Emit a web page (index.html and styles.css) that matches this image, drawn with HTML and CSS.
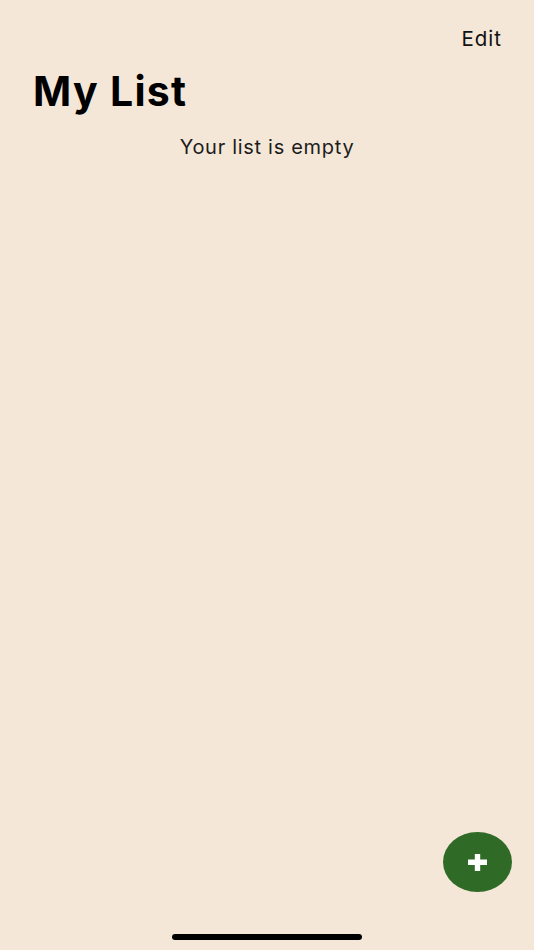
FILE: index.html
```html
<!DOCTYPE html>
<html lang="en">
<head>
<meta charset="utf-8">
<title>My List</title>
<link rel="stylesheet" href="styles.css">
</head>
<body>
<div class="screen">
  <header class="nav">
    <button class="edit">Edit</button>
  </header>
  <h1 class="title">My List</h1>
  <p class="empty">Your list is empty</p>
  <button class="fab" aria-label="Add">
    <svg width="19" height="17" viewBox="0 0 19 17"><rect x="0" y="5.5" width="19" height="5.5" fill="#fff"/><rect x="6.8" y="0" width="5.4" height="17" fill="#fff"/></svg>
  </button>
  <div class="home-indicator"></div>
</div>
</body>
</html>
```
FILE: styles.css
```css
html, body {
  margin: 0;
  padding: 0;
  background: #f5e7d7;
}
.screen {
  position: relative;
  width: 534px;
  height: 950px;
  overflow: hidden;
  font-family: Inter, "Liberation Sans", sans-serif;
  color: #111;
}
.nav {
  display: flex;
  justify-content: flex-end;
  padding: 23px 33px 0 0;
  height: 32px;
}
.edit {
  background: none;
  border: 0;
  padding: 0;
  font: 400 20.5px/26px Inter, "Liberation Sans", sans-serif;
  letter-spacing: 1px;
  margin-right: -1px;
  color: #111;
}
.title {
  margin: 12px 0 0 33px;
  font-size: 41px;
  line-height: 48px;
  font-weight: 700;
  color: #000;
  letter-spacing: 1.3px;
}
.empty {
  margin: 19px 0 0;
  text-align: center;
  font-size: 20px;
  line-height: 26px;
  font-weight: 400;
  color: #1c1c1c;
  letter-spacing: 0.7px;
}
.fab {
  position: absolute;
  left: 443px;
  top: 832px;
  width: 69px;
  height: 60px;
  border-radius: 50%;
  border: 0;
  padding: 0;
  background: #2f6a27;
  display: flex;
  align-items: center;
  justify-content: center;
}
.home-indicator {
  position: absolute;
  left: 172px;
  top: 934px;
  width: 190px;
  height: 6px;
  border-radius: 3px;
  background: #000;
}
```
